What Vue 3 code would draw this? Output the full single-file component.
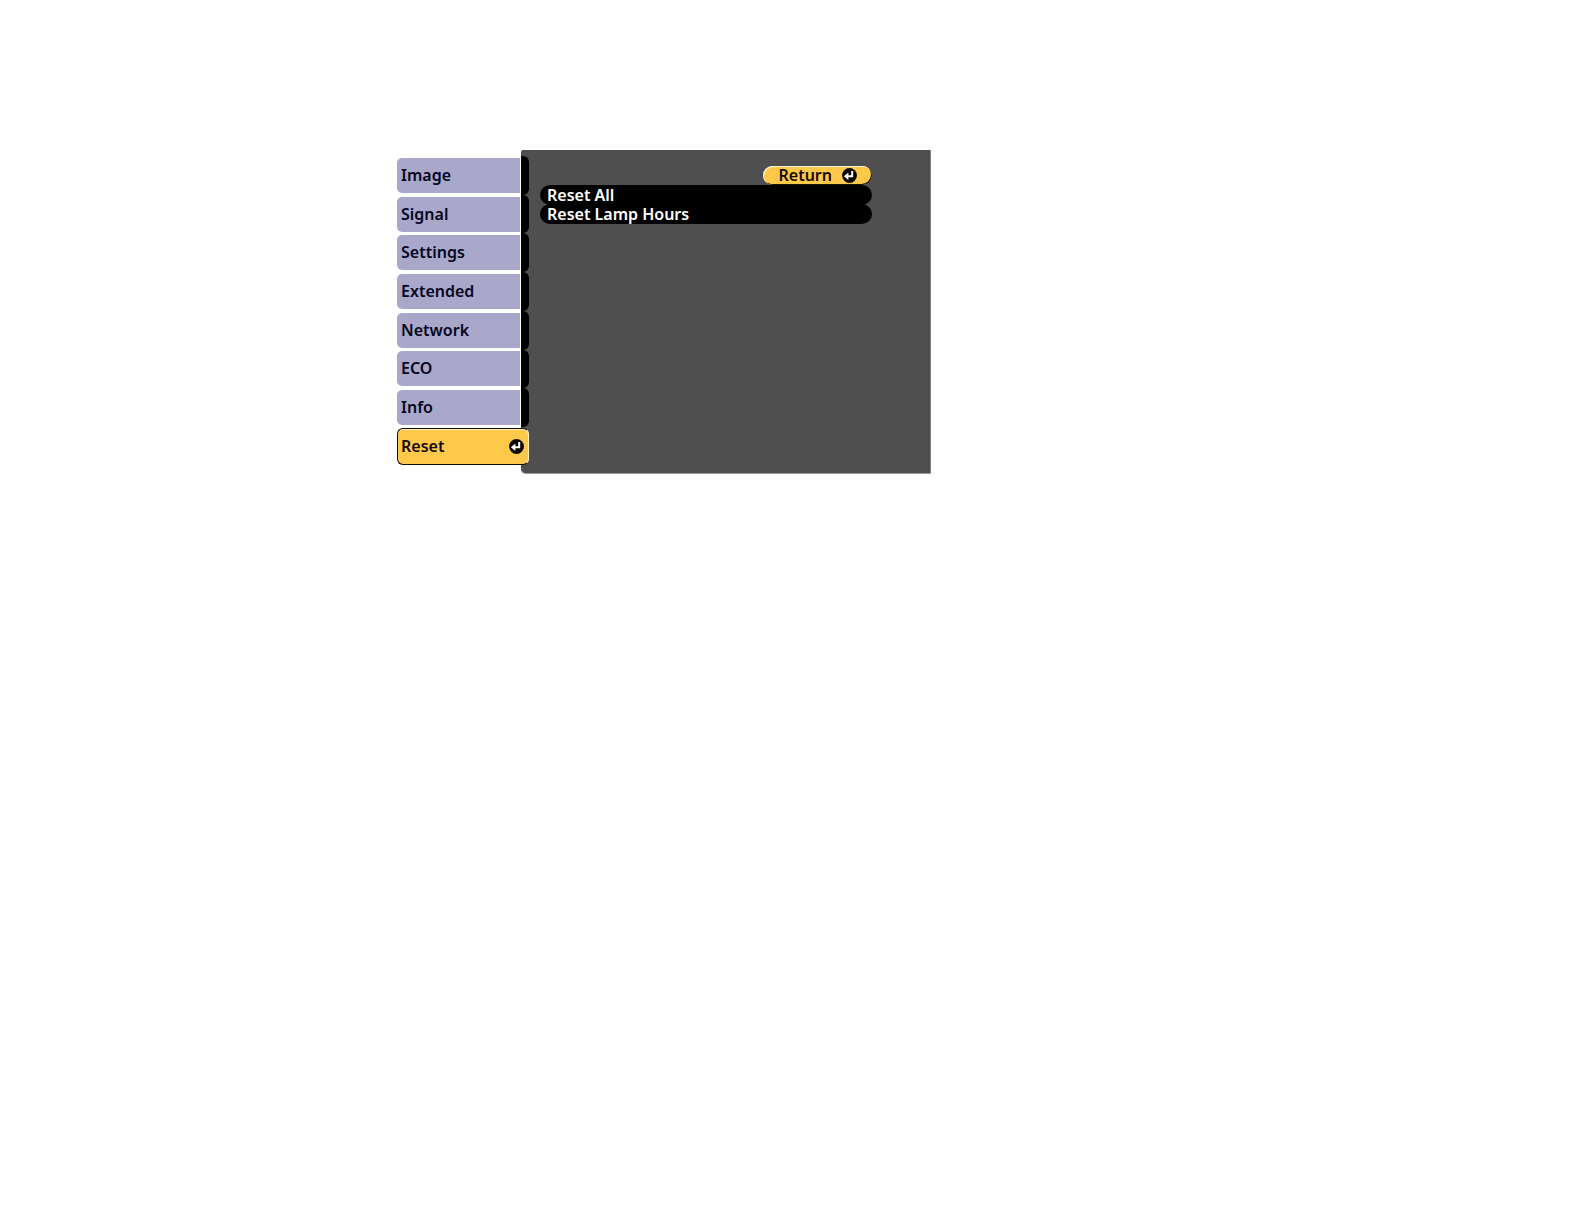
<script setup>
import { ref } from 'vue'

const tabs = ['Image', 'Signal', 'Settings', 'Extended', 'Network', 'ECO', 'Info', 'Reset']
const active = ref('Reset')
const items = ['Reset All', 'Reset Lamp Hours']
</script>

<template>
  <main class="page">
    <div class="menu">
      <nav class="tabs">
        <button
          v-for="tab in tabs"
          :key="tab"
          type="button"
          class="tab"
          :class="{ active: tab === active }"
          @click="active = tab"
        >
          <span class="label">{{ tab }}</span>
          <span v-if="tab !== active" class="cap"></span>
          <svg v-else class="enter" viewBox="0 0 15 15" aria-hidden="true">
            <circle cx="7.5" cy="7.5" r="7.4" fill="#080400" />
            <path d="M10.2 3V8.2H5.5" fill="none" stroke="#fff" stroke-width="2" />
            <path d="M1.9 8.2L6.4 4.4V12Z" fill="#fff" />
          </svg>
        </button>
      </nav>
      <section class="panel">
        <button type="button" class="return">
          <span>Return</span>
          <svg class="enter" viewBox="0 0 15 15" aria-hidden="true">
            <circle cx="7.5" cy="7.5" r="7.4" fill="#080400" />
            <path d="M10.2 3V8.2H5.5" fill="none" stroke="#fff" stroke-width="2" />
            <path d="M1.9 8.2L6.4 4.4V12Z" fill="#fff" />
          </svg>
        </button>
        <button v-for="item in items" :key="item" type="button" class="item">{{ item }}</button>
      </section>
    </div>
  </main>
</template>

<style>
body {
  background: #fff;
}
</style>

<style scoped>
.page {
  padding: 150px 24px 24px 397px;
  font-family: "Noto Sans", sans-serif;
}

button {
  margin: 0;
  padding: 0;
  border: 0;
  background: none;
  font: inherit;
  font-size: 16px;
  font-weight: 600;
  text-align: left;
  cursor: pointer;
}

.menu {
  display: flex;
  max-width: 534px;
}

.tabs {
  position: relative;
  z-index: 1;
  flex: 0 0 132px;
  display: grid;
  grid-template-rows: repeat(8, 1fr);
  height: 310px;
  margin: 6px -8px 8px 0;
}

.tab {
  display: flex;
  color: #05051e;
  line-height: 34px;
}

.label {
  flex: 1;
  align-self: center;
  height: 35px;
  padding-left: 4px;
  border-radius: 5px 0 0 5px;
  background: #a9a8ca;
}

.cap {
  width: 8px;
  align-self: stretch;
  margin-left: 1px;
  border-radius: 0 6px 6px 0;
  background: #000;
}

.tab.active {
  align-items: center;
  margin: 1px 0;
  padding-right: 4px;
  border: 1px solid #120b00;
  border-right-color: #fff0c0;
  border-radius: 6px;
  background: #fec84a;
  box-shadow: inset 0 1px #fff0c0;
  color: #150900;
}

.tab.active .label {
  padding-left: 3px;
  background: none;
}

.enter {
  flex: none;
  width: 15px;
  height: 15px;
}

.panel {
  flex: 1;
  display: flex;
  flex-direction: column;
  padding: 16px 58px 16px 19px;
  border-right: 1px solid #808080;
  border-bottom: 1px solid #999;
  border-radius: 2px 1px 1px 5px;
  background: #4f4f4f;
}

.return {
  align-self: flex-end;
  display: flex;
  align-items: center;
  gap: 10px;
  height: 19px;
  padding: 0 15px;
  border-radius: 10px;
  background: #fec84a;
  box-shadow: inset 1px 1px #fff4d4, inset -1px -1px #1c1300;
  color: #150900;
  line-height: 19px;
}

.item {
  height: 20px;
  margin-bottom: -1px;
  padding-left: 7px;
  border-radius: 10px;
  background: #000;
  color: #fff;
  line-height: 20px;
}
</style>
